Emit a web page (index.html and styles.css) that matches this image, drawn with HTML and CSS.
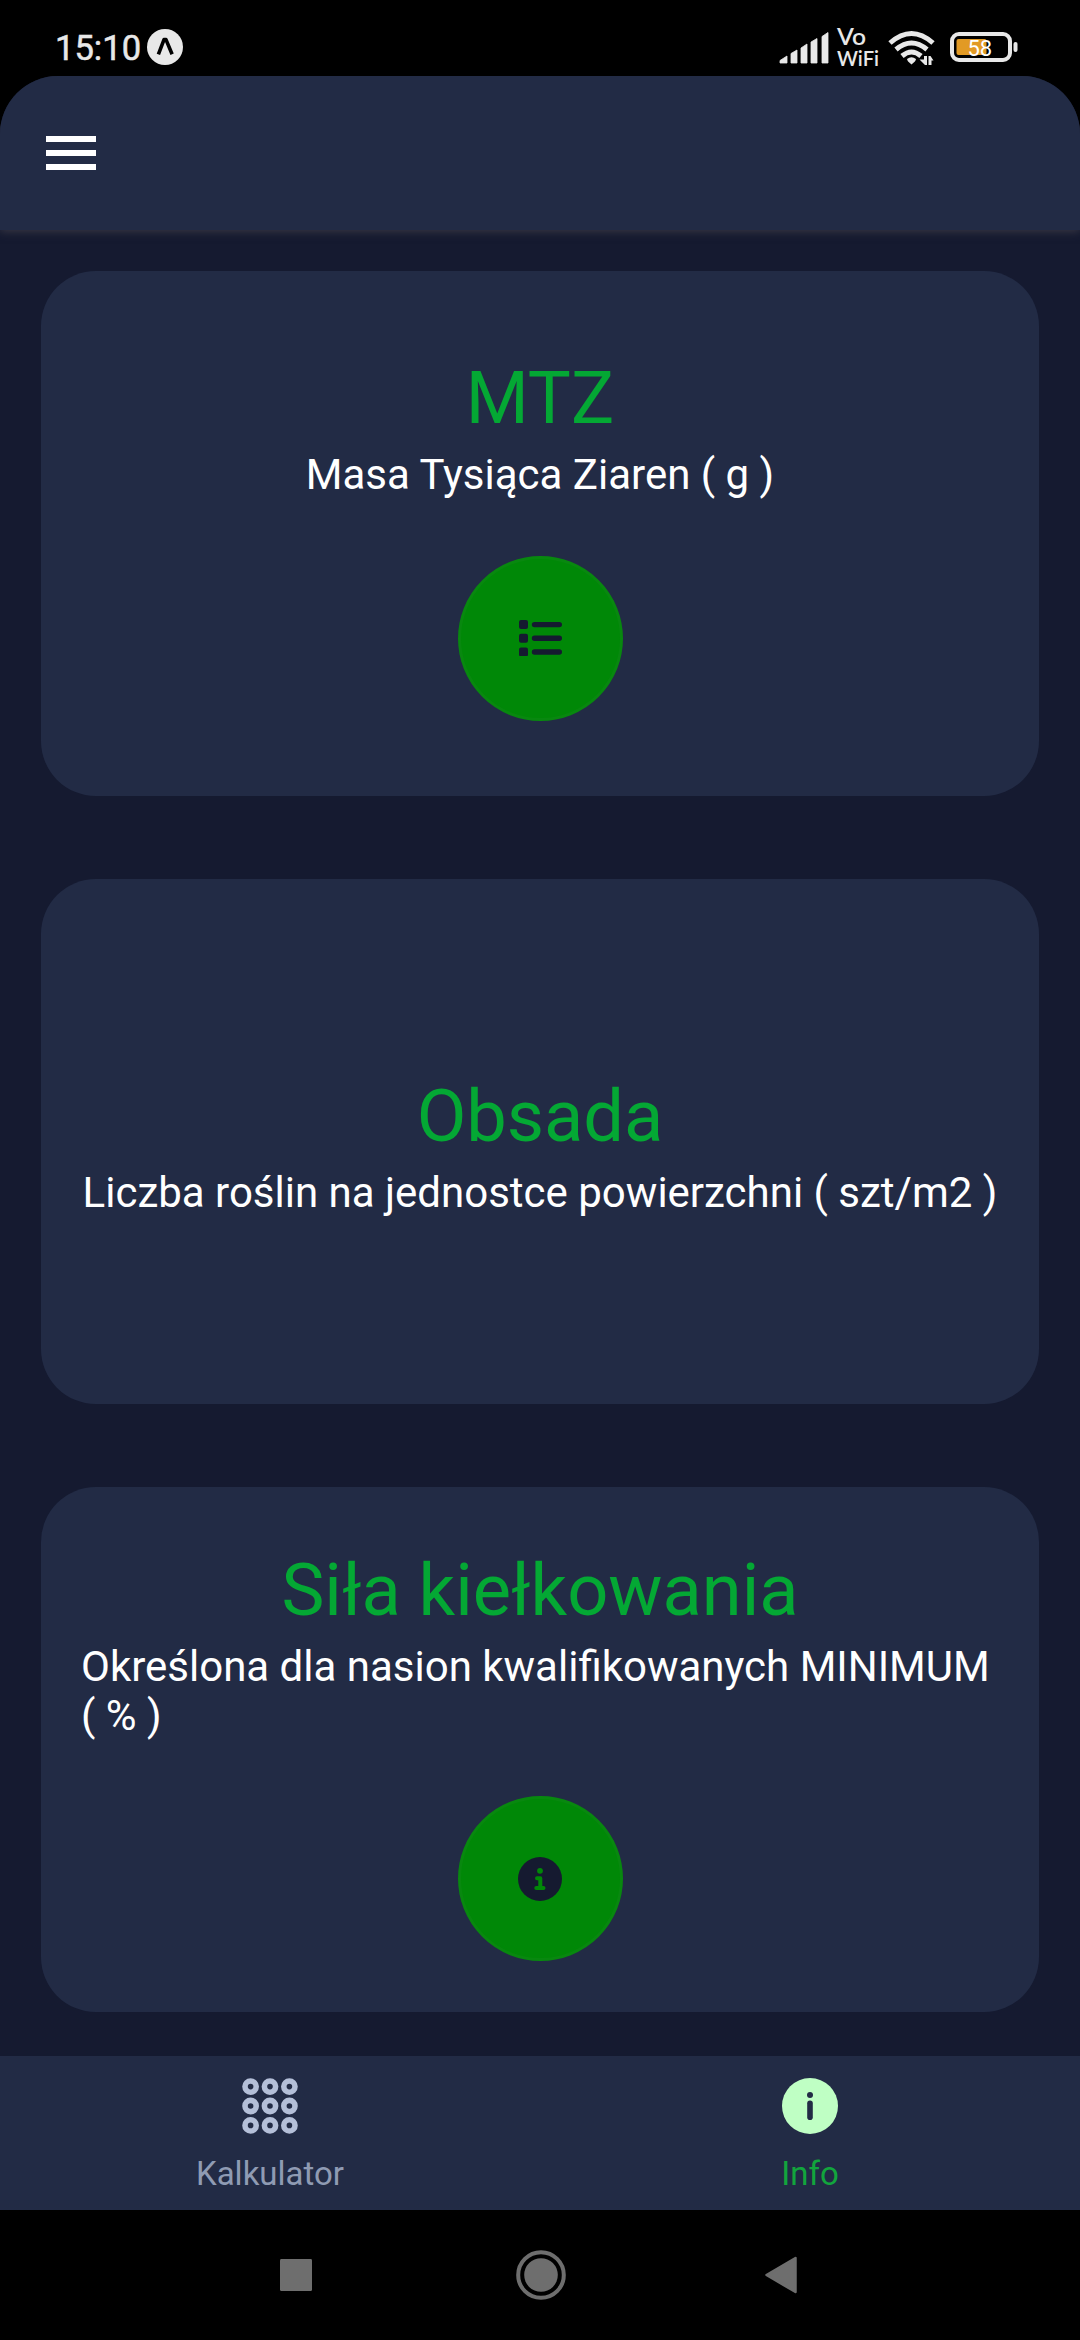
FILE: index.html
```html
<!DOCTYPE html>
<html lang="pl">
<head>
<meta charset="utf-8">
<title>Info</title>
<link rel="stylesheet" href="styles.css">
</head>
<body>
<div class="screen">
  <div class="statusbar">
    <span class="clock">15:10</span>
    <svg class="expo" width="36" height="36" viewBox="0 0 36 36"><circle cx="18" cy="18" r="18" fill="#e8e8e8"/><path d="M11.4 25.3L17 10.6H19L25.1 25.3" fill="none" stroke="#000" stroke-width="3.6" stroke-linejoin="round"/></svg>
    <svg class="signal" width="240" height="40" viewBox="0 0 240 40" fill="#e8e8e8">
      <path d="M0 35V32.500L7 28V35ZM11 35V25.500L17 22V35ZM21 35V20L27 16V35ZM31 35V14L37 10.500V35ZM42 35V8.500L48 4.500V35Z" stroke="#e8e8e8" stroke-width=".8" stroke-linejoin="round"/>
      <g class="vo"><text x="57" y="17" font-size="23" textLength="29" lengthAdjust="spacingAndGlyphs">Vo</text><text x="57" y="38" font-size="21.500" textLength="42" lengthAdjust="spacingAndGlyphs">WiFi</text></g>
      <g fill="none" stroke="#e8e8e8" stroke-width="5"><path d="M110 15Q131.500-4 153 15"/><path d="M116 21.500Q131.500 8.500 147 21.500"/><path d="M122 28Q131.500 20 141 28"/></g>
      <path d="M127 31Q131.500 27.500 136 31Q136 33 131.500 36.500Q127 33 127 31Z"/>
      <path d="M144 28H147V37H145L139.500 31.500H144ZM148.500 37V28H150.500L153.500 32.500H151.500V37Z"/>
      <rect x="172" y="6" width="58" height="26" rx="7" fill="none" stroke="#e8e8e8" stroke-width="4"/>
      <rect x="176.500" y="11" width="30" height="16" rx="2" fill="#e29a24"/>
      <rect x="233.500" y="14" width="4" height="10" rx="2"/>
      <text class="pct" x="187.500" y="27.500" font-size="22" fill="#fff">58</text>
    </svg>
  </div>
  <div class="app">
    <header class="header">
      <svg width="50" height="34" viewBox="0 0 50 34"><path d="M0 3H50M0 17H50M0 31H50" stroke="#fff" stroke-width="5.800"/></svg>
    </header>
    <main class="list">
      <section class="card">
        <h2>MTZ</h2>
        <p>Masa Tysiąca Ziaren ( g )</p>
        <div class="round"><svg width="44" height="36" viewBox="-1 0 44 36" fill="#151a30"><rect x="0" width="9" height="9" rx="2"/><rect y="13.700" width="9" height="9" rx="2"/><rect y="27.400" width="9" height="9" rx="2"/><path d="M15.500 4.600H40.300M15.500 18.200H40.300M15.500 32H40.300" stroke="#151a30" stroke-width="5.400" stroke-linecap="round"/></svg></div>
      </section>
      <section class="card">
        <h2>Obsada</h2>
        <p>Liczba roślin na jednostce powierzchni ( szt/m2 )</p>
      </section>
      <section class="card">
        <h2>Siła kiełkowania</h2>
        <p>Określona dla nasion kwalifikowanych MINIMUM ( % )</p>
        <div class="round"><svg width="44" height="44" viewBox="0 0 44 44"><circle cx="22" cy="22" r="22" fill="#151a30"/><circle cx="22" cy="13.800" r="2.900" fill="#008807"/><path d="M19 21.200H22.300V31M18.300 31H25.500" fill="none" stroke="#008807" stroke-width="4" stroke-linecap="round" stroke-linejoin="round"/></svg></div>
      </section>
    </main>
    <nav class="tabs">
      <a class="tab">
        <svg width="56" height="56" viewBox="0 0 56 56" fill="none" stroke="#b4bfd8" stroke-width="5.600"><circle cx="8.600" cy="8.600" r="5.600"/><circle cx="28" cy="8.600" r="5.600"/><circle cx="47.400" cy="8.600" r="5.600"/><circle cx="8.600" cy="28" r="5.600"/><circle cx="28" cy="28" r="5.600"/><circle cx="47.400" cy="28" r="5.600"/><circle cx="8.600" cy="47.400" r="5.600"/><circle cx="28" cy="47.400" r="5.600"/><circle cx="47.400" cy="47.400" r="5.600"/></svg>
        <span>Kalkulator</span>
      </a>
      <a class="tab active">
        <svg width="56" height="56" viewBox="0 0 56 56"><circle cx="28" cy="28" r="28" fill="#bfffc4"/><circle cx="28" cy="17" r="3" fill="#222b45"/><path d="M28 25.300V39.300" stroke="#222b45" stroke-width="5.600" stroke-linecap="round"/></svg>
        <span>Info</span>
      </a>
    </nav>
  </div>
  <div class="sysnav">
    <svg width="32" height="38" viewBox="0 0 32 38"><rect y="1" width="32" height="37" rx="1.500" fill="#6e6e6e" transform="translate(0 2.200) scale(1 .865)"/></svg>
    <svg class="home" width="50" height="50" viewBox="0 0 50 50"><circle cx="25" cy="25" r="22.800" fill="none" stroke="#6e6e6e" stroke-width="4"/><circle cx="25" cy="25" r="16.800" fill="#6e6e6e"/></svg>
    <svg width="32" height="38" viewBox="0 0 32 38"><path d="M1.500 19L30.500 2V36Z" fill="#6e6e6e" stroke="#6e6e6e" stroke-width="2.500" stroke-linejoin="round"/></svg>
  </div>
</div>
</body>
</html>
```
FILE: styles.css
```css
* { box-sizing: border-box; }
body { margin: 0; background: #000; font-family: Roboto, sans-serif; }
svg { display: block; flex: none; }
.screen { width: 1080px; height: 2340px; display: flex; flex-direction: column; overflow: hidden; background: #000; }
.statusbar { height: 76px; flex: none; display: flex; align-items: flex-start; padding: 28px 60px 0 55px; color: #e8e8e8; }
.clock { width: 92px; font-size: 34.6px; line-height: 40px; white-space: nowrap; -webkit-text-stroke: .5px #e8e8e8; }
.expo { margin-top: 1px; }
.signal { margin-left: auto; overflow: visible; }
.vo { font-family: Lato, sans-serif; font-weight: 600; }
.pct { font-weight: 400; }
.app { height: 2134px; flex: none; display: flex; flex-direction: column; background: #151a30; border-radius: 58px 58px 0 0; overflow: hidden; }
.header { height: 154px; flex: none; display: flex; align-items: center; padding-left: 46px; background: #222b45; box-shadow: 0 1px 9px rgba(65, 62, 72, .9); }
.list { flex: 1; display: flex; flex-direction: column; gap: 83px; padding: 41px 41px 0; }
.card { height: 525px; flex: none; display: flex; flex-direction: column; align-items: center; justify-content: center; padding: 0 40px; background: #222b45; border-radius: 55px; }
.card h2 { margin: 0; padding-top: 11.4px; font-size: 72.2px; line-height: 84px; font-weight: 400; color: #04a834; }
.card p { margin: 8.7px 0 2.5px; font-size: 42px; line-height: 49px; color: #fff; }
.round { width: 165px; height: 165px; flex: none; margin-top: 54.4px; display: flex; align-items: center; justify-content: center; border-radius: 50%; background: #008807; border: 3px solid #08880f; }
.tabs { height: 154px; flex: none; display: flex; background: #222b45; }
.tab { flex: 1; display: flex; flex-direction: column; align-items: center; padding-top: 22px; font-size: 33px; line-height: 39px; color: #8f9bb3; }
.tab span { margin-top: 20px; }
.tab.active { color: #12a53d; }
.sysnav { flex: 1; display: flex; align-items: center; justify-content: space-between; padding: 0 283px 0 280px; }
.home { margin-left: 4px; }
```
